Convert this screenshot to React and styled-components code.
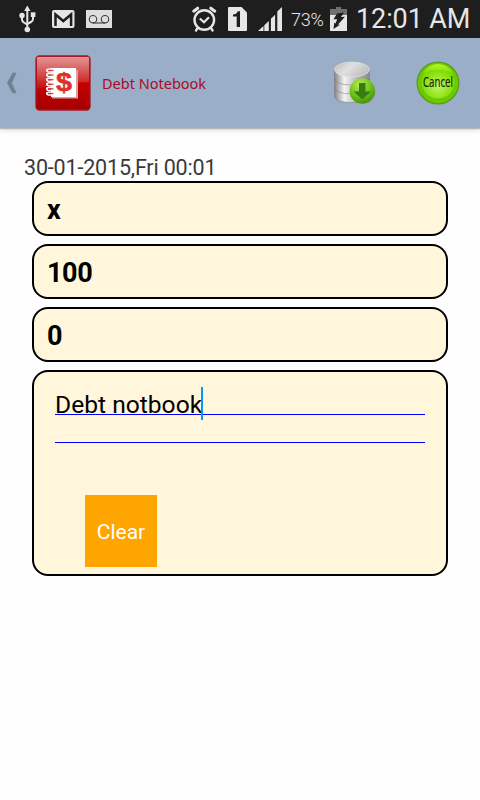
import React, { useState } from "react";
import styled, { createGlobalStyle } from "styled-components";

const GlobalStyle = createGlobalStyle`
  * {
    box-sizing: border-box;
  }

  body {
    margin: 0;
    background: #fefefe;
    font-family: Roboto, sans-serif;
  }

  svg {
    display: block;
    flex: none;
    overflow: visible;
  }
`;

const Screen = styled.div`
  width: 480px;
  height: 800px;
  overflow: hidden;
  background: #fefefe;
`;

const StatusBar = styled.div`
  display: flex;
  justify-content: space-between;
  height: 38px;
  padding: 0 10px 0 18px;
  background: #1e1e1e;
  color: #e6e6e6;
`;

const StatusGroup = styled.div`
  display: flex;
  align-items: center;
  gap: 11px;
`;

const Battery = styled.span`
  width: 34px;
  margin: 2px -6px 0 -2px;
  font-size: 18px;
  font-weight: 300;
  line-height: 20px;
  letter-spacing: -0.2px;
`;

const Clock = styled.span`
  width: 114px;
  margin-left: -2px;
  font-size: 27px;
  line-height: 38px;
  letter-spacing: -0.1px;
  white-space: nowrap;
`;

const ActionBar = styled.header`
  display: flex;
  align-items: center;
  height: 90px;
  padding: 0 20px 0 6px;
  background: #9aaec8;
  box-shadow: 0 1px 1px #b9b6b4, 0 2px 5px rgba(0, 0, 0, 0.16);

  h1 {
    flex: 1;
    margin: 0 0 0 11px;
    color: #ab0a24;
    font-family: "Noto Sans", sans-serif;
    font-size: 14.5px;
    font-weight: 400;
    line-height: 20px;
  }
`;

const IconButton = styled.button`
  display: block;
  margin: 0 0 0 ${(props) => props.$left || 0}px;
  padding: 0;
  border: none;
  background: none;
  cursor: pointer;
`;

const Form = styled.main`
  display: flex;
  flex-direction: column;
  padding: 26px 32px 0;
`;

const DateText = styled.div`
  height: 27px;
  margin-left: -8px;
  color: #3a3a3a;
  font-size: 21.5px;
  line-height: 27px;
  letter-spacing: -0.17px;
`;

const Field = styled.input`
  width: 416px;
  height: 55px;
  margin: 0 0 8px;
  padding: 3px 13px 0;
  border: 2px solid #000;
  border-radius: 16px;
  outline: none;
  background: #fff6dc;
  color: #000;
  font-family: Roboto, sans-serif;
  font-size: 27px;
  font-weight: 700;
  letter-spacing: -0.4px;
`;

const NoteBox = styled.section`
  width: 416px;
  height: 206px;
  padding: 15px 21px 0;
  border: 2px solid #000;
  border-radius: 16px;
  background: #fff6dc;
`;

const NoteLine = styled.div`
  display: flex;
  align-items: flex-end;
  height: 28px;
  border-bottom: 1px solid #0000ff;
  color: #000;
  font-size: 24.6px;
  line-height: 18px;

  &:first-child {
    position: relative;
    z-index: 1;
  }
`;

const Cursor = styled.i`
  position: absolute;
  top: 0;
  left: 146px;
  width: 2px;
  height: 33px;
  background: #0099ff;
`;

const ClearButton = styled.button`
  display: block;
  width: 72px;
  height: 72px;
  margin: 52px 0 0 30px;
  padding: 1px 0 0;
  border: none;
  background: #ffa500;
  color: #fff;
  font-family: Roboto, sans-serif;
  font-size: 21px;
  cursor: pointer;
`;

function UsbIcon() {
  return (
    <svg width="23" height="28" viewBox="0 0 23 28">
      <g fill="none" stroke="#e6e6e6" strokeWidth="2">
        <path d="M9.3 5v19M4 11v3.5q0 2 2 3l3.3 2.3M15 9v5q0 2-2 3l-3.7 2" />
      </g>
      <path d="M9.3 .5l3.2 5.5H6.2z" fill="#e6e6e6" />
      <circle cx="4" cy="10.5" r="2.7" fill="#e6e6e6" />
      <path d="M12.8 7.3h4.6V12h-4.6z" fill="#e6e6e6" />
      <circle cx="9.3" cy="24.5" r="2.8" fill="#e6e6e6" />
    </svg>
  );
}

function MailIcon() {
  return (
    <svg width="23" height="18" viewBox="0 0 23 18">
      <rect width="22.500" height="18" rx="2" fill="#e6e6e6" />
      <path d="M3.500 16V4.500l7.800 6.500 7.800-6.500V16" fill="none" stroke="#1e1e1e" strokeWidth="2.500" />
    </svg>
  );
}

function VoicemailIcon() {
  return (
    <svg width="26" height="18" viewBox="0 0 26 18">
      <rect width="26" height="18" fill="#dedede" />
      <g fill="none" stroke="#3c3c3c" strokeWidth="1.1">
        <circle cx="7" cy="9.2" r="3.7" />
        <circle cx="19" cy="9.2" r="3.7" />
        <path d="M7 13h12" />
      </g>
    </svg>
  );
}

function AlarmIcon() {
  return (
    <svg width="25" height="26" viewBox="0 0 25 26">
      <g fill="none" stroke="#e6e6e6" strokeLinecap="round">
        <circle cx="12.3" cy="14" r="9.8" strokeWidth="2.4" />
        <path d="M7.8 12.5l4.2 3.8 5-5" strokeWidth="2.2" strokeLinecap="butt" />
        <path d="M1.7 5.2l4-3M18.8 2.2l4 3" strokeWidth="3" />
        <path d="M5.3 22.5l-1.3 2M19.3 22.5l1.3 2" strokeWidth="2.3" />
      </g>
    </svg>
  );
}

function SimIcon() {
  return (
    <svg width="19" height="24" viewBox="0 0 19 24">
      <path d="M1 0h12.5L19 5.5V23a1 1 0 0 1-1 1H1a1 1 0 0 1-1-1V1a1 1 0 0 1 1-1z" fill="#e6e6e6" />
      <path d="M5 7.5q4-.5 4.8-3.3H12V20H8.7V9.6H5z" fill="#1e1e1e" />
    </svg>
  );
}

function SignalIcon() {
  return (
    <svg width="24" height="24" viewBox="0 0 24 24">
      <path
        d="M0 24l5.5-5V24zM6.3 24v-5.700l4.500-4.200V24zM12.900 24V11.800l4.200-4V24zM19.300 24V4.600L24 0v24z"
        fill="#e6e6e6"
      />
    </svg>
  );
}

function BatteryIcon() {
  return (
    <svg width="17" height="24" viewBox="0 0 17 24">
      <path d="M6 0h5v2h6v6H0V2h6z" fill="#707070" />
      <path d="M0 8h17v16H0z" fill="#e6e6e6" />
      <path d="M7 6.500L14 5.500l-3 4.500 4-.3-7 7.800 2 .2-6.500 4.300.8-6.500 1.300 1 1.500-4.200H3.500z" fill="#1e1e1e" />
    </svg>
  );
}

function BackIcon() {
  return (
    <svg width="11" height="22" viewBox="0 0 11 22">
      <path d="M6.600 .7h4L5.800 11l4.800 10.300h-4L1 11z" fill="#6f8292" />
    </svg>
  );
}

function NotebookIcon() {
  return (
    <svg width="56" height="56" viewBox="0 0 56 56">
      <defs>
        <linearGradient id="red" x2="0" y2="1">
          <stop offset="0" stopColor="#c62828" />
          <stop offset=".5" stopColor="#c50000" />
          <stop offset="1" stopColor="#a60000" />
        </linearGradient>
        <linearGradient id="gloss" x2="0" y2="1">
          <stop offset="0" stopColor="#fff" stopOpacity=".5" />
          <stop offset="1" stopColor="#fff" stopOpacity=".05" />
        </linearGradient>
      </defs>
      <rect x="1" y="1" width="54" height="54" rx="3.5" fill="url(#red)" stroke="#a01824" strokeWidth="1.3" />
      <path d="M2 2h52v25Q28 28 2 34z" fill="url(#gloss)" />
      <path d="M17 15h26v28.500H17z" fill="#dda0a0" />
      <path d="M16 13h25v29H16z" fill="#fff" />
      <g fill="none">
        {[15.5, 20.1, 24.7, 29.3, 33.9, 38.5].map((y) => (
          <g key={y}>
            <ellipse cx="15.500" cy={y} rx="3.800" ry="1.600" stroke="#fff" strokeWidth="1.500" />
            <path d={`M13.500 ${y}h5`} stroke="#c54b4b" strokeWidth="1.300" />
          </g>
        ))}
      </g>
      <text
        x="29"
        y="36"
        fill="#df302b"
        stroke="#df302b"
        strokeWidth=".5"
        textAnchor="middle"
        fontFamily="Liberation Sans, sans-serif"
        fontSize="25"
        fontWeight="700"
        textLength="16"
        lengthAdjust="spacingAndGlyphs"
      >
        $
      </text>
    </svg>
  );
}

function SaveIcon() {
  return (
    <svg width="42" height="44" viewBox="0 0 42 44">
      <defs>
        <linearGradient id="metal">
          <stop offset="0" stopColor="#858585" />
          <stop offset=".28" stopColor="#f4f4f4" />
          <stop offset=".65" stopColor="#b5b5b5" />
          <stop offset="1" stopColor="#888" />
        </linearGradient>
        <linearGradient id="lid" x2="1" y2=".5">
          <stop offset="0" stopColor="#bcbcbc" />
          <stop offset=".5" stopColor="#e0e0e0" />
          <stop offset="1" stopColor="#c0c0c0" />
        </linearGradient>
        <radialGradient id="ball" cx=".4" cy=".25" r=".8">
          <stop offset="0" stopColor="#b5ec54" />
          <stop offset=".6" stopColor="#69bd18" />
          <stop offset="1" stopColor="#3c8d0b" />
        </radialGradient>
      </defs>
      {[18.5, 9.8, 1].map((y) => (
        <path
          key={y}
          d={`M1.500 ${y + 8}v8.500q1 6.500 17.500 6.500t17.500-6.500v-8.500z`}
          fill="url(#metal)"
          stroke="#777"
          strokeWidth=".5"
        />
      ))}
      <ellipse cx="19" cy="8.500" rx="17.500" ry="7.500" fill="url(#lid)" stroke="#e6e6e6" strokeWidth=".6" />
      <circle cx="29.300" cy="30" r="12.800" fill="url(#ball)" />
      <path d="M26 22h6.500v8.500h5.500L29.300 38.500l-8.700-8H26z" fill="#367b13" />
    </svg>
  );
}

function CancelIcon() {
  return (
    <svg width="44" height="44" viewBox="0 0 44 44">
      <defs>
        <radialGradient id="green" cx=".5" cy=".62" r=".55">
          <stop offset="0" stopColor="#c0f36a" />
          <stop offset=".6" stopColor="#94e51d" />
          <stop offset="1" stopColor="#79d600" />
        </radialGradient>
        <linearGradient id="shine" x2="0" y2="1">
          <stop offset="0" stopColor="#baff18" />
          <stop offset="1" stopColor="#9aed22" stopOpacity=".2" />
        </linearGradient>
      </defs>
      <circle cx="22" cy="22" r="20.800" fill="#6bc900" stroke="#579c1c" strokeWidth="1.300" />
      <circle cx="22" cy="21" r="16.500" fill="url(#green)" />
      <path d="M6 13Q12 3 22 3t16 10q-7-4-16-4T6 13z" fill="url(#shine)" />
      <text
        x="7"
        y="26.300"
        fill="#17230c"
        stroke="#17230c"
        strokeWidth=".2"
        fontFamily="Open Sans, sans-serif"
        fontSize="14"
        textLength="30"
        lengthAdjust="spacingAndGlyphs"
      >
        Cancel
      </text>
    </svg>
  );
}

function App() {
  const [name, setName] = useState("x");
  const [amount, setAmount] = useState("100");
  const [paid, setPaid] = useState("0");
  const [note, setNote] = useState("Debt notbook");

  return (
    <Screen>
      <GlobalStyle />
      <StatusBar>
        <StatusGroup>
          <UsbIcon />
          <MailIcon />
          <VoicemailIcon />
        </StatusGroup>
        <StatusGroup>
          <AlarmIcon />
          <SimIcon />
          <SignalIcon />
          <Battery>73%</Battery>
          <BatteryIcon />
          <Clock>12:01 AM</Clock>
        </StatusGroup>
      </StatusBar>
      <ActionBar>
        <IconButton aria-label="Back">
          <BackIcon />
        </IconButton>
        <IconButton as="div" $left={18}>
          <NotebookIcon />
        </IconButton>
        <h1>Debt Notebook</h1>
        <IconButton aria-label="Save">
          <SaveIcon />
        </IconButton>
        <IconButton $left={41}>
          <CancelIcon />
        </IconButton>
      </ActionBar>
      <Form>
        <DateText>30-01-2015,Fri 00:01</DateText>
        <Field value={name} onChange={(e) => setName(e.target.value)} />
        <Field value={amount} onChange={(e) => setAmount(e.target.value)} />
        <Field value={paid} onChange={(e) => setPaid(e.target.value)} />
        <NoteBox>
          <NoteLine>
            {note}
            <Cursor />
          </NoteLine>
          <NoteLine />
          <ClearButton onClick={() => setNote("")}>Clear</ClearButton>
        </NoteBox>
      </Form>
    </Screen>
  );
}

export default App;
